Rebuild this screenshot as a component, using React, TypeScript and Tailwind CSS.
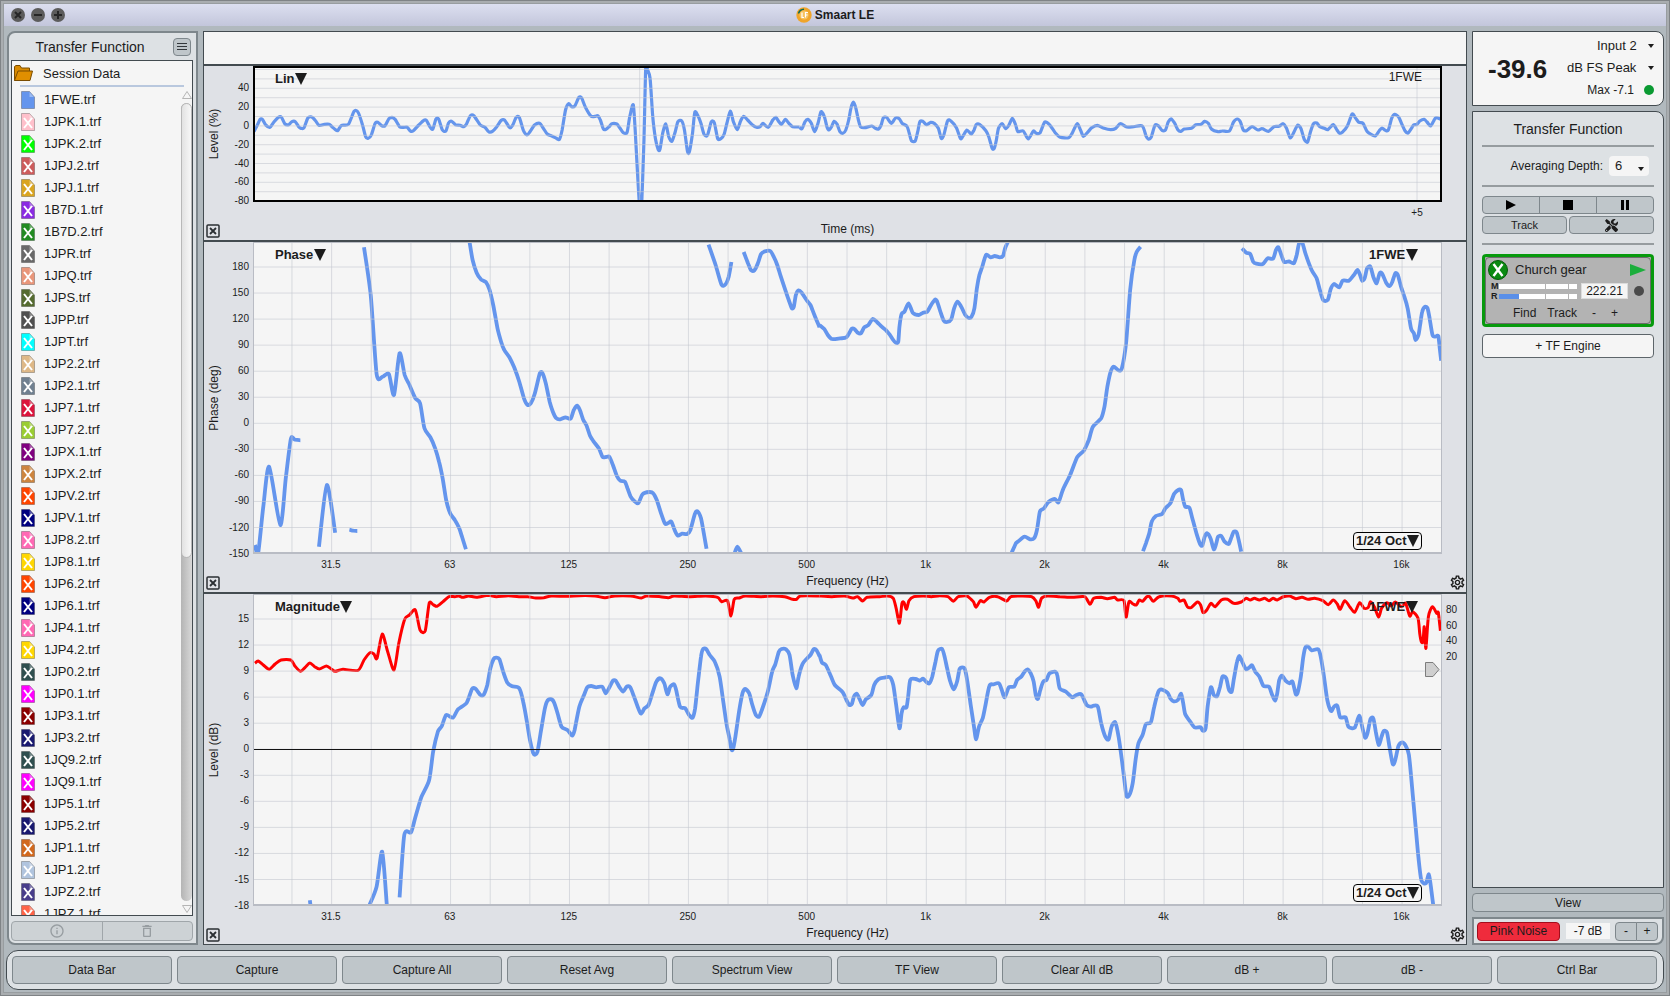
import React, { useState } from 'react';
import { MdDeleteOutline, MdInfoOutline, MdOutlineSettings } from 'react-icons/md';
import { FaTools } from 'react-icons/fa';

type Point = [number, number];

interface Scale {
    sx: number;
    dx: number;
    dy: number;
}

interface Sweep {
    scale: Scale;
    runs: string[];
}

interface Tick {
    label: string;
    at: number;
}

const SWEEP_BLUE = '#6495ed';
const PLOT_WIDTH = 1190;

const files: { name: string; color: string }[] = [
    { name: '1FWE.trf', color: '#6495ed' },
    { name: '1JPK.1.trf', color: '#ffc0cb' },
    { name: '1JPK.2.trf', color: '#00ff00' },
    { name: '1JPJ.2.trf', color: '#cd5c5c' },
    { name: '1JPJ.1.trf', color: '#daa520' },
    { name: '1B7D.1.trf', color: '#8a2be2' },
    { name: '1B7D.2.trf', color: '#228b22' },
    { name: '1JPR.trf', color: '#696969' },
    { name: '1JPQ.trf', color: '#e9967a' },
    { name: '1JPS.trf', color: '#556b2f' },
    { name: '1JPP.trf', color: '#505050' },
    { name: '1JPT.trf', color: '#00ffff' },
    { name: '1JP2.2.trf', color: '#deb887' },
    { name: '1JP2.1.trf', color: '#708090' },
    { name: '1JP7.1.trf', color: '#dc143c' },
    { name: '1JP7.2.trf', color: '#9acd32' },
    { name: '1JPX.1.trf', color: '#800080' },
    { name: '1JPX.2.trf', color: '#cd853f' },
    { name: '1JPV.2.trf', color: '#ff4500' },
    { name: '1JPV.1.trf', color: '#000080' },
    { name: '1JP8.2.trf', color: '#ff69b4' },
    { name: '1JP8.1.trf', color: '#ffd700' },
    { name: '1JP6.2.trf', color: '#ff4500' },
    { name: '1JP6.1.trf', color: '#000080' },
    { name: '1JP4.1.trf', color: '#ff69b4' },
    { name: '1JP4.2.trf', color: '#ffd700' },
    { name: '1JP0.2.trf', color: '#2f4f4f' },
    { name: '1JP0.1.trf', color: '#ff00ff' },
    { name: '1JP3.1.trf', color: '#8b0000' },
    { name: '1JP3.2.trf', color: '#191970' },
    { name: '1JQ9.2.trf', color: '#2f4f4f' },
    { name: '1JQ9.1.trf', color: '#ff00ff' },
    { name: '1JP5.1.trf', color: '#8b0000' },
    { name: '1JP5.2.trf', color: '#191970' },
    { name: '1JP1.1.trf', color: '#d2691e' },
    { name: '1JP1.2.trf', color: '#b0c4de' },
    { name: '1JPZ.2.trf', color: '#483d8b' },
    { name: '1JPZ.1.trf', color: '#ff6347' },
];

const actions = [
    'Data Bar',
    'Capture',
    'Capture All',
    'Reset Avg',
    'Spectrum View',
    'TF View',
    'Clear All dB',
    'dB +',
    'dB -',
    'Ctrl Bar',
];

const impulse: Sweep[] = [
    {
        scale: { sx: 2.6133, dx: -53, dy: -36 },
        runs: [
            '141,305 150,285 157,268 163,268 172,285 183,292 193,276 205,262 213,262 222,282 232,284 240,275 249,275 258,290 264,295 272,293 282,264 292,261 302,272 311,286 325,283 338,283 345,290 352,297 360,302 370,286 388,283 403,244 413,246 425,285 433,320 440,325 448,315 458,280 465,277 475,287 484,287 494,266 502,262 510,268 522,290 532,292 542,292 550,303 558,302 572,285 585,271 592,271 602,292 609,297 617,267 624,267 634,300 643,303 650,279 658,274 668,284 680,286 690,290 697,282 707,257 716,257 733,285 745,292 755,305 765,304 775,292 788,271 797,271 810,293 818,285 827,262 835,262 846,302 855,315 863,305 875,285 888,280 898,295 908,312 920,318 932,325 940,328 947,300 956,240 964,221 972,230 980,228 991,202 998,204 1008,232 1022,258 1034,259 1040,257 1047,270 1055,297 1062,298 1070,290 1077,281 1090,282 1098,294 1107,308 1117,307 1124,260 1133,224 1138,300 1149,520 1155,520 1161,330 1166,100 1170,118 1177,145 1184,260 1191,325 1198,358 1203,358 1210,310 1218,282 1226,320 1234,334 1243,305 1250,275 1260,273 1267,300 1275,365 1280,365 1288,310 1294,247 1302,257 1310,280 1318,312 1327,316 1337,276 1345,278 1354,326 1363,325 1371,312 1378,280 1387,243 1395,275 1405,299 1414,272 1422,259 1432,270 1445,285 1455,292 1465,290 1472,280 1486,292 1498,270 1506,262 1514,275 1521,283 1531,268 1540,280 1550,290 1568,291',
        ],
    },
    {
        scale: { sx: 2.3758, dx: 547, dy: -36 },
        runs: [
            '0,292 6,296 13,275 20,268 28,280 36,305 44,280 51,245 59,260 65,290 70,300 76,290 82,274 89,282 96,305 103,310 110,300 117,270 122,235 128,216 134,235 140,270 145,290 155,293 172,288 180,295 188,297 194,285 199,264 207,262 218,280 228,264 237,266 244,280 255,288 260,305 266,332 275,333 281,305 286,275 293,274 302,284 312,277 320,280 330,295 337,325 343,315 352,272 360,273 373,293 383,326 390,315 398,300 408,312 415,300 420,284 428,283 443,302 450,320 458,355 463,355 468,330 473,295 482,281 490,296 498,285 506,265 514,285 519,305 532,303 544,327 556,303 563,310 572,308 583,276 595,285 608,308 620,322 640,323 648,310 660,281 668,300 675,319 685,307 695,293 708,286 722,294 740,299 752,295 763,281 778,291 795,290 815,288 824,318 829,327 836,322 845,286 853,287 862,301 870,300 877,275 884,267 892,280 900,300 907,304 915,297 932,295 942,284 955,283 963,274 972,280 980,298 995,305 1005,303 1022,303 1032,276 1041,267 1048,275 1055,300 1063,302 1076,290 1090,300 1100,296 1115,304 1128,290 1140,289 1150,281 1158,295 1167,324 1176,305 1184,286 1192,295 1200,328 1208,336 1215,305 1222,281 1230,279 1237,290 1248,295 1256,299 1269,284 1278,300 1284,310 1292,305 1303,287 1314,252 1322,264 1330,277 1340,280 1350,305 1368,318 1378,303 1385,294 1393,301 1400,300 1408,265 1415,253 1425,262 1433,285 1440,303 1447,309 1455,295 1460,285 1468,283 1475,273 1485,268 1492,276 1500,288 1507,275 1513,263 1525,268',
        ],
    },
];

const phase: Sweep[] = [
    {
        scale: { sx: 2.529, dx: -53, dy: -2 },
        runs: [
            '139,915 147,940 160,800 175,680 203,855 217,715 230,597 240,599 254,601',
            '301,920 321,735 342,878',
            '378,869 388,872 398,873',
            '415,22 432,165 447,402 462,410 478,402 491,465 505,340 518,405 530,435 545,475 557,490 568,565 583,592 595,625 605,665 614,715 623,780 633,820 645,840 656,865 663,890 673,928',
            '682,5 690,60 700,98 711,118 724,127 733,150 742,195 753,265 762,305 770,330 783,352 795,382 808,425 820,475 829,495 837,490 847,462 860,400 867,400 875,430 885,485 893,515 902,535 912,538 925,532 938,536 946,510 955,497 962,512 970,540 978,556 987,587 996,604 1010,626 1019,651 1028,651 1036,650 1045,675 1055,708 1064,722 1075,725 1082,745 1090,770 1098,782 1109,790 1120,763 1137,756 1147,760 1156,780 1167,820 1177,851 1185,849 1193,845 1203,875 1210,887 1220,881 1233,882 1241,870 1253,820 1260,815 1268,835 1275,880 1282,926',
            '1287,14 1305,75 1320,134 1330,133 1338,110 1345,66',
            '1353,940 1360,920 1370,940',
            '1376,36 1387,70 1395,91 1403,91 1412,70 1420,42 1430,34 1443,33 1452,50 1461,75 1470,110 1480,145 1490,180 1498,205 1503,200 1508,165 1515,151 1523,158 1535,180 1545,195 1555,225 1568,262',
        ],
    },
    {
        scale: { sx: 2.4123, dx: 567, dy: -2 },
        runs: [
            '0,255 12,268 20,285 30,297 50,295 65,292 78,266 85,268 92,278 100,280 108,262 118,255 128,237 138,245 150,260 160,270 170,285 178,300 184,308 190,305 193,260 198,222 205,215 215,190 225,218 240,225 250,218 260,215 268,198 278,180 283,182 292,215 300,242 308,246 318,238 325,205 333,185 342,200 352,225 360,234 367,230 374,205 380,145 386,105 393,80 402,45 413,52 423,48 435,52 443,48 448,25 455,5',
            '464,938 474,910 480,904 495,890 508,898 518,895 525,870 532,815 542,805 552,787 568,777 577,787 588,748 605,705 622,652 638,632 650,600 660,560 680,535 688,500 695,440 703,395 710,380 722,391 730,385 740,310 750,150 760,60 766,35 775,20',
            '781,934 788,910 796,880 802,845 812,828 827,822 835,805 847,790 856,762 866,750 873,750 878,780 883,800 893,803 900,835 910,880 918,910 924,917 930,890 936,880 944,895 952,928 958,910 962,890 970,888 978,905 988,912 995,890 1000,875 1007,877 1012,900 1018,935',
            '1020,25 1030,38 1040,42 1047,65 1055,71 1070,72 1082,55 1095,56 1102,30 1108,22 1115,45 1122,66 1133,64 1145,70 1152,45 1158,10 1166,10 1173,40 1188,90 1200,115 1208,150 1216,180 1227,180 1234,148 1242,132 1255,142 1263,122 1278,122 1290,105 1299,90 1305,105 1310,122 1316,115 1322,85 1330,80 1337,110 1345,130 1352,100 1358,100 1368,128 1376,138 1383,125 1390,100 1396,104 1404,140 1412,170 1420,205 1428,265 1435,280 1439,300 1446,285 1450,255 1455,215 1462,200 1468,205 1473,235 1480,285 1487,290 1494,288 1497,320 1501,362',
        ],
    },
];

const magnitude: Sweep[] = [
    {
        scale: { sx: 2.529, dx: -53, dy: -14 },
        runs: [
            '278,961 280,980',
            '429,975 447,920 461,815 473,978',
            '505,952 517,765 534,757 545,712 560,652 580,600 590,515 602,455 612,438 623,405 640,413 653,388 675,368 688,328 697,326 710,345 718,344 727,315 735,265 743,237 750,233 758,238 768,278 778,308 790,319 808,325 818,365 828,430 835,480 843,518 848,524 854,515 862,460 872,390 878,365 887,357 895,365 905,400 915,440 930,450 942,467 948,450 960,380 972,345 980,322 990,318 1003,322 1018,320 1027,340 1037,320 1045,302 1052,302 1062,322 1071,335 1080,320 1089,322 1100,355 1115,400 1125,385 1135,375 1145,340 1155,305 1165,295 1175,310 1183,343 1190,320 1200,313 1205,330 1215,380 1228,385 1238,405 1247,413 1253,385 1260,310 1268,230 1273,207 1281,207 1290,225 1303,245 1315,290 1325,370 1333,435 1341,480 1345,508 1349,508 1355,470 1365,390 1373,340 1380,327 1390,340 1398,375 1407,405 1415,410 1422,390 1437,335 1448,275 1456,253 1465,215 1472,207 1483,208 1492,225 1500,285 1509,325 1515,290 1525,252 1535,237 1545,225 1553,208 1560,210 1568,228',
        ],
    },
    {
        scale: { sx: 2.4123, dx: 567, dy: -14 },
        runs: [
            '0,225 6,248 15,255 28,290 37,315 55,335 65,360 72,375 78,372 83,350 90,341 97,358 104,375 112,358 125,345 132,315 142,298 155,293 170,292 178,315 185,375 193,445 198,400 203,382 210,382 214,350 219,300 232,297 242,302 250,296 258,306 265,310 272,290 280,245 286,212 296,207 302,230 308,265 315,302 324,328 332,305 338,268 345,262 351,268 357,305 365,375 373,440 378,478 385,440 394,415 400,380 410,318 420,313 433,310 440,330 447,352 457,322 470,320 477,300 487,290 495,275 502,268 510,280 517,305 522,345 527,357 533,330 540,305 548,300 555,280 568,275 574,285 580,325 595,335 610,352 620,345 632,343 645,375 655,380 662,377 672,380 680,430 690,470 698,478 705,440 714,427 722,470 730,540 736,600 741,648 748,645 756,610 763,540 770,490 780,465 788,432 800,427 808,380 818,335 825,328 840,338 847,355 855,364 865,360 873,341 878,370 883,403 895,425 905,442 920,442 925,452 932,445 937,380 945,322 952,345 960,348 967,320 973,290 982,295 988,328 995,335 1000,300 1008,245 1014,228 1022,250 1030,268 1038,262 1044,256 1052,275 1062,290 1072,318 1085,320 1093,345 1100,362 1105,340 1110,300 1117,287 1125,302 1135,310 1142,305 1150,343 1155,335 1162,290 1168,230 1173,202 1180,200 1188,211 1204,208 1210,230 1218,290 1226,360 1235,393 1242,380 1250,377 1257,412 1270,412 1277,440 1292,443 1303,407 1310,440 1317,473 1323,460 1330,418 1337,415 1343,455 1350,495 1357,470 1362,453 1370,457 1376,500 1384,552 1390,540 1398,497 1407,487 1414,495 1423,525 1432,640 1445,820 1453,900 1464,910 1471,883 1476,920 1482,978',
        ],
    },
];

const coherence: Sweep[] = [
    {
        scale: { sx: 2.529, dx: -53, dy: -14 },
        runs: [
            '139,250 147,243 160,255 175,268 190,252 205,240 230,240 240,258 254,274 266,262 278,249 290,260 302,267 320,258 333,268 342,274 362,268 400,271 415,240 430,218 440,222 448,235 461,162 475,215 491,270 503,190 518,118 530,105 545,90 557,150 570,152 580,70 590,74 600,79 615,65 630,50 645,50 655,48 665,52 680,48 700,52 730,46 750,50 780,47 810,50 830,50 850,54 870,53 890,48 930,49 960,47 1000,48 1025,53 1050,48 1090,48 1117,54 1130,48 1165,50 1185,53 1200,48 1240,50 1280,48 1310,52 1320,65 1335,62 1344,108 1352,58 1365,54 1380,48 1420,50 1450,48 1480,50 1500,58 1510,58 1520,48 1568,48',
        ],
    },
    {
        scale: { sx: 2.4123, dx: 567, dy: -14 },
        runs: [
            '0,48 30,50 60,48 80,54 92,50 104,63 115,52 145,50 165,48 178,55 185,85 193,130 199,70 204,68 210,88 216,62 228,50 250,48 270,50 290,47 310,50 323,64 335,50 355,48 366,58 372,66 378,82 388,62 397,66 410,52 430,50 452,63 462,50 490,48 512,50 522,62 529,82 536,55 550,48 580,50 610,52 640,50 653,73 662,55 680,52 695,56 712,52 720,60 735,62 740,112 747,65 757,72 765,75 772,60 780,64 790,50 797,50 806,64 820,50 850,48 865,55 870,64 880,60 888,80 898,82 912,66 920,75 926,98 935,90 945,70 955,80 970,60 985,58 1000,70 1018,66 1030,55 1040,60 1050,55 1062,60 1075,55 1085,62 1095,55 1105,60 1120,50 1135,48 1150,56 1165,52 1180,58 1195,55 1215,62 1228,74 1240,60 1250,72 1257,88 1268,62 1280,80 1292,97 1304,68 1315,85 1325,82 1330,65 1340,82 1350,112 1357,85 1370,68 1380,78 1390,66 1405,80 1415,70 1425,108 1432,95 1445,115 1449,160 1453,185 1457,185 1460,140 1464,205 1470,110 1480,80 1490,100 1494,98 1499,152',
        ],
    },
];

// Soft spline through the recorded points
function toPath(run: string, { sx, dx, dy }: Scale): string {
    const points: Point[] = run.split(' ').map((pair) => {
        const [x, y] = pair.split(',').map(Number);
        return [x / sx + dx, y / 3 + dy];
    });
    const at = (i: number) => points[Math.max(0, Math.min(points.length - 1, i))];
    let d = `M${points[0][0].toFixed(1)} ${points[0][1].toFixed(1)}`;
    for (let i = 0; i < points.length - 1; i++) {
        const [p0, p1, p2, p3] = [at(i - 1), at(i), at(i + 1), at(i + 2)];
        const values = [
            p1[0] + (p2[0] - p0[0]) / 8,
            p1[1] + (p2[1] - p0[1]) / 8,
            p2[0] - (p3[0] - p1[0]) / 8,
            p2[1] - (p3[1] - p1[1]) / 8,
            p2[0],
            p2[1],
        ];
        d += 'C' + values.map((v) => v.toFixed(1)).join(' ');
    }
    return d;
}

// 1/3 octave lines, octave labels on every third one
const frequencyLines = Array.from({ length: 29 }, (_, i) => 39 + i * 39.68);
const frequencyTicks: Tick[] = ['31.5', '63', '125', '250', '500', '1k', '2k', '4k', '8k', '16k'].map(
    (label, i) => ({ label, at: 78 + i * 119.04 })
);

const impulseTicks: Tick[] = [40, 20, 0, -20, -40, -60, -80].map((v) => ({
    label: `${v}`,
    at: 60 - v * 0.94,
}));
const phaseTicks: Tick[] = Array.from({ length: 12 }, (_, i) => ({
    label: `${180 - i * 30}`,
    at: 25 + i * 26.05,
}));
const magnitudeTicks: Tick[] = Array.from({ length: 12 }, (_, i) => ({
    label: `${15 - i * 3}`,
    at: 25 + i * 26.05,
}));
const coherenceTicks: Tick[] = [80, 60, 40, 20].map((v, i) => ({ label: `${v}`, at: 16 + i * 15.7 }));

function Triangle({ className }: { className: string }) {
    return (
        <svg viewBox="0 0 12 12" className={className} aria-hidden="true" preserveAspectRatio="none">
            <path d="M0 0H12L6 12Z" fill="#1c1c1c" />
        </svg>
    );
}

function PlotSelect({ label, value, className }: { label: string; value: string; className: string }) {
    return (
        <div className={`absolute flex items-center text-[13px] leading-4 font-bold ${className}`}>
            <select aria-label={label} className="appearance-none bg-transparent font-bold">
                <option>{value}</option>
            </select>
            <Triangle className="h-3 w-3" />
        </div>
    );
}

interface PlotPanelProps {
    title: string;
    traceName: string;
    axis: string;
    unit: string;
    height: number;
    yTicks: Tick[];
    xTicks: Tick[];
    yLines: number[];
    xLines: number[];
    sweeps: Sweep[];
    overlay?: Sweep[];
    rightTicks?: Tick[];
    zeroAt?: number;
    active?: boolean;
}

function PlotPanel({
    title,
    traceName,
    axis,
    unit,
    height,
    yTicks,
    xTicks,
    yLines,
    xLines,
    sweeps,
    overlay = [],
    rightTicks = [],
    zeroAt,
    active = false,
}: PlotPanelProps) {
    const pctY = (at: number) => `${(at / height) * 100}%`;
    const pctX = (at: number) => `${(at / PLOT_WIDTH) * 100}%`;

    return (
        <section
            aria-label={title}
            className={`flex min-h-0 flex-col border-t-2 border-[#434b50] bg-[#dfe1e6] ${
                active ? 'h-[176px] shrink-0' : 'flex-1'
            }`}
        >
            <div className="flex min-h-0 flex-1">
                <div className="flex w-5 items-center justify-center">
                    <span className="-rotate-90 text-xs whitespace-nowrap">{unit}</span>
                </div>
                <div className="relative w-[29px] text-[10px] leading-3">
                    {yTicks.map((tick) => (
                        <span
                            key={tick.label}
                            className="absolute right-1 -translate-y-1/2"
                            style={{ top: pctY(tick.at) }}
                        >
                            {tick.label}
                        </span>
                    ))}
                </div>
                <div className="relative min-w-0 flex-1 bg-[#f5f5f5]">
                    <svg
                        viewBox={`0 0 ${PLOT_WIDTH} ${height}`}
                        preserveAspectRatio="none"
                        className="absolute inset-0 h-full w-full"
                        fill="none"
                        role="img"
                        aria-label={`${title} ${traceName}`}
                    >
                        {sweeps.map((sweep) =>
                            sweep.runs.map((run) => (
                                <path
                                    key={run}
                                    d={toPath(run, sweep.scale)}
                                    stroke={SWEEP_BLUE}
                                    strokeWidth={active ? 3.2 : 3.8}
                                    strokeLinejoin="round"
                                />
                            ))
                        )}
                        {overlay.map((sweep) =>
                            sweep.runs.map((run) => (
                                <path
                                    key={run}
                                    d={toPath(run, sweep.scale)}
                                    stroke="#ff0000"
                                    strokeWidth={3}
                                    strokeLinejoin="round"
                                />
                            ))
                        )}
                        <g stroke="#c4c8d0" strokeOpacity={0.6}>
                            {yLines.map((y) => (
                                <path key={y} d={`M0 ${y}H${PLOT_WIDTH}`} />
                            ))}
                            {xLines.map((x) => (
                                <path key={x} d={`M${x} 0V${height}`} />
                            ))}
                        </g>
                        {zeroAt !== undefined && <path d={`M0 ${zeroAt}H${PLOT_WIDTH}`} stroke="#111" />}
                    </svg>
                    <div
                        className={`pointer-events-none absolute inset-0 ${
                            active ? 'border-2 border-black' : 'border border-b-2 border-[#b9bcc4]'
                        }`}
                    />
                    <PlotSelect label="Plot type" value={title} className="top-[5px] left-[22px]" />
                    {active ? (
                        <span className="absolute top-[3px] right-5 text-xs">{traceName}</span>
                    ) : (
                        <>
                            <PlotSelect label="Trace" value={traceName} className="top-[5px] right-6" />
                            <PlotSelect
                                label="Smoothing"
                                value="1/24 Oct"
                                className="right-5 bottom-1 rounded border border-black bg-[#f5f5f5] px-0.5"
                            />
                        </>
                    )}
                    {overlay.length > 0 && (
                        <svg viewBox="0 0 15 15" className="absolute top-[68px] right-0.5 h-[15px] w-[15px]" aria-hidden="true">
                            <path d="M.5.5H8L14 7.5 8 14.5H.5Z" fill="#cfcfcf" stroke="#7d7d7d" />
                        </svg>
                    )}
                </div>
                <div className="relative w-6 text-[10px] leading-3">
                    {rightTicks.map((tick) => (
                        <span
                            key={tick.label}
                            className="absolute left-1 -translate-y-1/2"
                            style={{ top: pctY(tick.at) }}
                        >
                            {tick.label}
                        </span>
                    ))}
                </div>
            </div>
            <div className="relative mr-6 ml-[49px] h-5 text-[10px] leading-3">
                {xTicks.map((tick) => (
                    <span
                        key={tick.label}
                        className="absolute top-[5px] -translate-x-1/2"
                        style={{ left: pctX(tick.at) }}
                    >
                        {tick.label}
                    </span>
                ))}
            </div>
            <div className="flex h-[18px] items-start pr-px pl-0.5 text-xs leading-[14px]">
                <button aria-label={`Close ${title}`} className="mt-0.5 h-[14px] w-[14px]">
                    <svg viewBox="0 0 14 14" className="h-full w-full" fill="none" stroke="#2b2f33">
                        <rect x="1" y="1" width="12" height="12" rx="1" strokeWidth="1.5" />
                        <path d="M4 4L10 10M10 4L4 10" strokeWidth="1.8" />
                    </svg>
                </button>
                <span className="flex-1 pl-[26px] text-center">{axis}</span>
                <span className="flex w-4 justify-center">
                    {!active && (
                        <button aria-label={`${title} settings`}>
                            <MdOutlineSettings size={17} color="#1c1c1c" />
                        </button>
                    )}
                </span>
            </div>
        </section>
    );
}

function FileIcon({ color, hidden }: { color: string; hidden: boolean }) {
    return (
        <svg viewBox="0 0 14 18" className="h-[18px] w-[14px] shrink-0" aria-hidden="true">
            <path d="M.5.5H8.5L13.5 6V17.5H.5Z" fill={color} stroke="#000" strokeOpacity=".25" />
            <path d="M8.5 1V6H13" fill="#fff" fillOpacity=".35" />
            {hidden && <path d="M3 5L11 15M11 5L3 15" stroke="#fff" strokeWidth="2" />}
        </svg>
    );
}

function Sidebar() {
    return (
        <aside className="flex w-[191px] shrink-0 flex-col rounded-l-lg border-2 border-[#7e878c] bg-[#dde1e4] pr-[3px] pb-0.5 pl-0.5">
            <div className="flex h-[27px] items-center">
                <h2 className="flex-1 pr-1 text-center text-sm">Transfer Function</h2>
                <button
                    aria-label="Data menu"
                    className="mr-0.5 flex h-[18px] w-[18px] flex-col items-center justify-center gap-0.5 rounded border border-[#7e878c] bg-[#bfc6ca]"
                >
                    <span className="h-px w-2.5 bg-[#33383c]" />
                    <span className="h-px w-2.5 bg-[#33383c]" />
                    <span className="h-px w-2.5 bg-[#33383c]" />
                </button>
            </div>
            <div className="flex min-h-0 flex-1 flex-col overflow-hidden border border-[#434b50] bg-[#f5f5f5]">
                <div className="flex h-6 shrink-0 items-center pl-0.5 text-[13px]">
                    <svg viewBox="0 0 19 17" className="h-[17px] w-[19px]" aria-hidden="true">
                        <path d="M.5 15.5V1.5L2 .5H6L7.5 3H15.5V6" fill="#d98a00" stroke="#7a4c00" />
                        <path d="M.5 15.5L4 6H18.5L16 15.5Z" fill="#e08f00" stroke="#7a4c00" />
                    </svg>
                    <span className="pt-0.5 pl-2.5">Session Data</span>
                </div>
                <div className="mr-2 ml-2 h-0.5 shrink-0 bg-[#b9c8de]" />
                <div className="flex min-h-0 flex-1 pt-0.5">
                    <ul className="min-h-0 flex-1 overflow-hidden pl-[9px]">
                        {files.map((file, i) => (
                            <li key={file.name} className="flex h-[22px] items-center gap-[9px] text-[13px]">
                                <FileIcon color={file.color} hidden={i > 0} />
                                <span>{file.name}</span>
                            </li>
                        ))}
                    </ul>
                    <div className="flex w-[11px] flex-col items-center gap-1 pt-0.5 pb-0.5">
                        <svg viewBox="0 0 10 8" className="h-2 w-2.5" fill="none" stroke="#b5b5b5" aria-hidden="true">
                            <path d="M5 .5L9.5 7.5H.5Z" />
                        </svg>
                        <div className="flex w-[11px] flex-1 rounded-full bg-gradient-to-r from-[#b4b4b4] to-[#d8d8d8]">
                            <div className="h-[57%] w-full rounded-full border border-[#b8b8b8] bg-gradient-to-r from-[#e2e2e2] to-[#f7f7f7]" />
                        </div>
                        <svg viewBox="0 0 10 8" className="h-2 w-2.5" fill="none" stroke="#b5b5b5" aria-hidden="true">
                            <path d="M5 7.5L9.5 .5H.5Z" />
                        </svg>
                    </div>
                </div>
            </div>
            <div className="mt-[5px] flex h-5 shrink-0 rounded border border-[#a0a6aa] bg-[#cdd2d5] text-[#979da1]">
                <button aria-label="File info" className="flex flex-1 items-center justify-center border-r border-[#a0a6aa]">
                    <MdInfoOutline size={16} />
                </button>
                <button aria-label="Delete file" className="flex flex-1 items-center justify-center">
                    <MdDeleteOutline size={16} />
                </button>
            </div>
        </aside>
    );
}

function SmallArrow() {
    return (
        <svg viewBox="0 0 6 4" className="h-1 w-1.5" aria-hidden="true">
            <path d="M0 0H6L3 4Z" fill="#1c1c1c" />
        </svg>
    );
}

function LevelMeter() {
    return (
        <div className="flex h-[75px] shrink-0 items-center justify-between rounded-r-lg border border-[#434b50] bg-[#f5f5f5] pr-[9px] pl-[15px]">
            <span className="text-[26px] leading-8 font-bold">-39.6</span>
            <div className="flex flex-col pb-0.5 text-[13px]">
                <div className="flex h-[22px] items-center justify-end gap-[11px]">
                    <select aria-label="Input" className="appearance-none bg-transparent">
                        <option>Input 2</option>
                    </select>
                    <SmallArrow />
                </div>
                <div className="flex h-[22px] items-center justify-end gap-[11px]">
                    <select aria-label="Scale" className="appearance-none bg-transparent">
                        <option>dB FS Peak</option>
                    </select>
                    <SmallArrow />
                </div>
                <div className="flex h-[22px] items-center justify-end gap-2.5 text-xs">
                    <span>Max -7.1</span>
                    <span className="h-2.5 w-2.5 rounded-full bg-[#0a9a32]" />
                </div>
            </div>
        </div>
    );
}

function MeterBar({ name, level }: { name: string; level: number }) {
    return (
        <div className="flex h-2.5 items-center">
            <span className="w-2 text-[9px] leading-none font-bold">{name}</span>
            <div className="relative h-[5px] w-[78px] bg-white">
                <div className="h-full bg-[#5a8fe8]" style={{ width: `${level}%` }} />
                <span className="absolute top-0 left-[46px] h-full w-px bg-[#b3b3b3]" />
                <span className="absolute top-0 left-[69px] h-full w-px bg-[#b3b3b3]" />
            </div>
        </div>
    );
}

function Engine() {
    return (
        <div className="h-[73px] rounded-sm border-3 border-[#079a0d] bg-[#b3b3b3]">
            <div className="h-full rounded-sm border border-[#6b6b6b]">
                <div className="flex h-[22px] items-center pt-0.5 pr-1 pl-0.5">
                    <svg viewBox="0 0 20 20" className="h-5 w-5" aria-hidden="true">
                        <circle cx="10" cy="10" r="9.5" fill="#0b8a12" stroke="#075c0b" />
                        <path d="M5.5 4L14.5 16M14.5 4L5.5 16" stroke="#fff" strokeWidth="2.4" />
                    </svg>
                    <span className="flex-1 pl-[7px] text-[13px]">Church gear</span>
                    <svg viewBox="0 0 16 12" className="h-3 w-4" aria-hidden="true">
                        <path d="M0 0L16 6L0 12Z" fill="#1cae3c" />
                    </svg>
                </div>
                <div className="flex h-[22px] items-center pl-[5px]">
                    <div>
                        <MeterBar name="M" level={0} />
                        <MeterBar name="R" level={26} />
                    </div>
                    <input
                        aria-label="Delay"
                        defaultValue="222.21"
                        className="ml-1 h-4 w-[47px] border border-[#dcdcdc] bg-[#f5f5f5] text-center text-xs"
                    />
                    <span className="ml-1.5 h-2.5 w-2.5 rounded-full bg-[#4a4a4a]" />
                </div>
                <div className="flex h-[22px] items-center pl-[27px] text-xs">
                    <button>Find</button>
                    <button className="ml-[11px]">Track</button>
                    <button className="ml-[15px]">-</button>
                    <button className="ml-[15px]">+</button>
                </div>
            </div>
        </div>
    );
}

function ControlBar() {
    const [depth, setDepth] = useState('6');
    const button = 'flex items-center justify-center border border-[#7e878c] bg-[#bfc6ca]';

    return (
        <aside className="flex w-48 shrink-0 flex-col gap-[5px]">
            <LevelMeter />
            <div className="flex flex-1 flex-col rounded-tr-lg border border-[#434b50] bg-[#dde1e4] px-[9px]">
                <h2 className="h-[33px] pt-[7px] text-center text-sm">Transfer Function</h2>
                <div className="flex h-[42px] items-center justify-end gap-1.5 border-y-2 border-[#969c9f] pr-[5px] text-xs">
                    <label htmlFor="depth">Averaging Depth:</label>
                    <div className="relative">
                        <select
                            id="depth"
                            value={depth}
                            onChange={(e) => setDepth(e.target.value)}
                            className="h-5 w-10 appearance-none rounded-sm bg-[#f5f5f5] pl-1.5 text-[13px]"
                        >
                            <option>6</option>
                        </select>
                        <span className="pointer-events-none absolute right-[5px] bottom-[5px]">
                            <SmallArrow />
                        </span>
                    </div>
                </div>
                <div className="mt-[9px] flex h-[18px]">
                    <button aria-label="Play" className={`${button} flex-1 rounded-l`}>
                        <svg viewBox="0 0 10 10" className="h-2.5 w-2.5"><path d="M0 0L10 5L0 10Z" /></svg>
                    </button>
                    <button aria-label="Stop" className={`${button} -ml-px flex-1`}>
                        <svg viewBox="0 0 10 10" className="h-2.5 w-2.5"><path d="M0 0H10V10H0Z" /></svg>
                    </button>
                    <button aria-label="Pause" className={`${button} -ml-px flex-1 rounded-r`}>
                        <svg viewBox="0 0 10 10" className="h-2.5 w-2.5"><path d="M1 0H4V10H1ZM6 0H9V10H6Z" /></svg>
                    </button>
                </div>
                <div className="mt-0.5 flex h-[18px] gap-0.5 text-[11px]">
                    <button className={`${button} flex-1 rounded`}>Track</button>
                    <button aria-label="Tools" className={`${button} flex-1 rounded`}>
                        <FaTools size={13} />
                    </button>
                </div>
                <hr className="mt-[9px] mb-[9px] border-t-2 border-[#969c9f]" />
                <Engine />
                <button className="mt-[7px] h-6 rounded border border-[#5d656a] bg-[#f5f5f5] text-xs">+ TF Engine</button>
            </div>
            <button className="h-[19px] shrink-0 rounded border border-[#7e878c] bg-[#bfc6ca] text-xs">View</button>
            <div className="flex h-7 shrink-0 items-center rounded-br-lg border-2 border-[#7e878c] bg-[#dde1e4] pr-1 pl-[3px] text-xs">
                <button className="h-[19px] w-[83px] rounded border border-[#a30d1c] bg-[#ef2b3c]">Pink Noise</button>
                <span className="ml-1.5 h-4 w-11 bg-[#f5f5f5] text-center">-7 dB</span>
                <div className="ml-[5px] flex h-[19px] flex-1">
                    <button className={`${button} flex-1 rounded-l`}>-</button>
                    <button className={`${button} -ml-px flex-1 rounded-r`}>+</button>
                </div>
            </div>
        </aside>
    );
}

function TitleBar() {
    return (
        <header className="relative flex h-[22px] shrink-0 items-center justify-center bg-gradient-to-b from-[#dcdff0] to-[#c3c6db]">
            <div className="absolute top-1 left-[7px] flex gap-1.5">
                {['M4 4L10 10M10 4L4 10', 'M3 7H11', 'M3 7H11M7 3V11'].map((d, i) => (
                    <button key={d} aria-label={['Close', 'Minimize', 'Zoom'][i]} className="h-3.5 w-3.5">
                        <svg viewBox="0 0 14 14" className="h-full w-full">
                            <circle cx="7" cy="7" r="7" fill="#5c5c5c" />
                            <path d={d} stroke="#262626" strokeWidth="2" />
                        </svg>
                    </button>
                ))}
            </div>
            <svg viewBox="0 0 16 16" className="h-4 w-4" aria-hidden="true">
                <circle cx="8" cy="8" r="7.7" fill="#f0a52a" />
                <path d="M2.5 6.5A6 6 0 0 1 8 2.2" fill="none" stroke="#0d6b57" strokeWidth="1.6" />
                <circle cx="8" cy="8" r="4.6" fill="#f6c25f" />
                <path d="M6 5.5V10.5H8M9.5 10.5V5.5H12M9.5 8H11.5" fill="none" stroke="#fff" strokeWidth="1.2" />
            </svg>
            <h1 className="pl-[3px] text-xs font-bold">Smaart LE</h1>
        </header>
    );
}

export default function App() {
    return (
        <div className="h-screen border border-[#7f8386] bg-[#a9adb0] p-0.5 font-['Liberation_Sans',Arial,sans-serif] text-[#1c1c1c]">
            <div className="flex h-full flex-col border border-[#989da0] bg-[#b1b9be]">
                <TitleBar />
                <main className="flex min-h-0 flex-1 gap-[5px] pt-[5px] pr-0.5 pl-[3px]">
                    <Sidebar />
                    <div className="flex min-w-0 flex-1 flex-col border border-[#434b50]">
                        <div className="h-8 shrink-0 bg-[#f5f5f5]" />
                        <PlotPanel
                            title="Lin"
                            traceName="1FWE"
                            axis="Time (ms)"
                            unit="Level (%)"
                            height={136}
                            yTicks={impulseTicks}
                            xTicks={[{ label: '+5', at: 1165 }]}
                            yLines={Array.from({ length: 14 }, (_, i) => 3.5 + i * 9.4)}
                            xLines={[387, 1165]}
                            sweeps={impulse}
                            active
                        />
                        <PlotPanel
                            title="Phase"
                            traceName="1FWE"
                            axis="Frequency (Hz)"
                            unit="Phase (deg)"
                            height={312}
                            yTicks={phaseTicks}
                            xTicks={frequencyTicks}
                            yLines={phaseTicks.map((tick) => tick.at)}
                            xLines={frequencyLines}
                            sweeps={phase}
                        />
                        <PlotPanel
                            title="Magnitude"
                            traceName="1FWE"
                            axis="Frequency (Hz)"
                            unit="Level (dB)"
                            height={312}
                            yTicks={magnitudeTicks}
                            xTicks={frequencyTicks}
                            yLines={magnitudeTicks.map((tick) => tick.at)}
                            xLines={frequencyLines}
                            sweeps={magnitude}
                            overlay={coherence}
                            rightTicks={coherenceTicks}
                            zeroAt={155.5}
                        />
                    </div>
                    <ControlBar />
                </main>
                <footer className="mt-[5px] mr-0.5 mb-0.5 ml-0.5 flex h-10 shrink-0 gap-[5px] rounded-xl border border-[#434b50] bg-[#dde1e4] py-[5px] pr-1.5 pl-[5px]">
                    {actions.map((action) => (
                        <button
                            key={action}
                            className="flex-1 rounded border border-[#7e878c] bg-[#bfc6ca] text-xs"
                        >
                            {action}
                        </button>
                    ))}
                </footer>
            </div>
        </div>
    );
}
